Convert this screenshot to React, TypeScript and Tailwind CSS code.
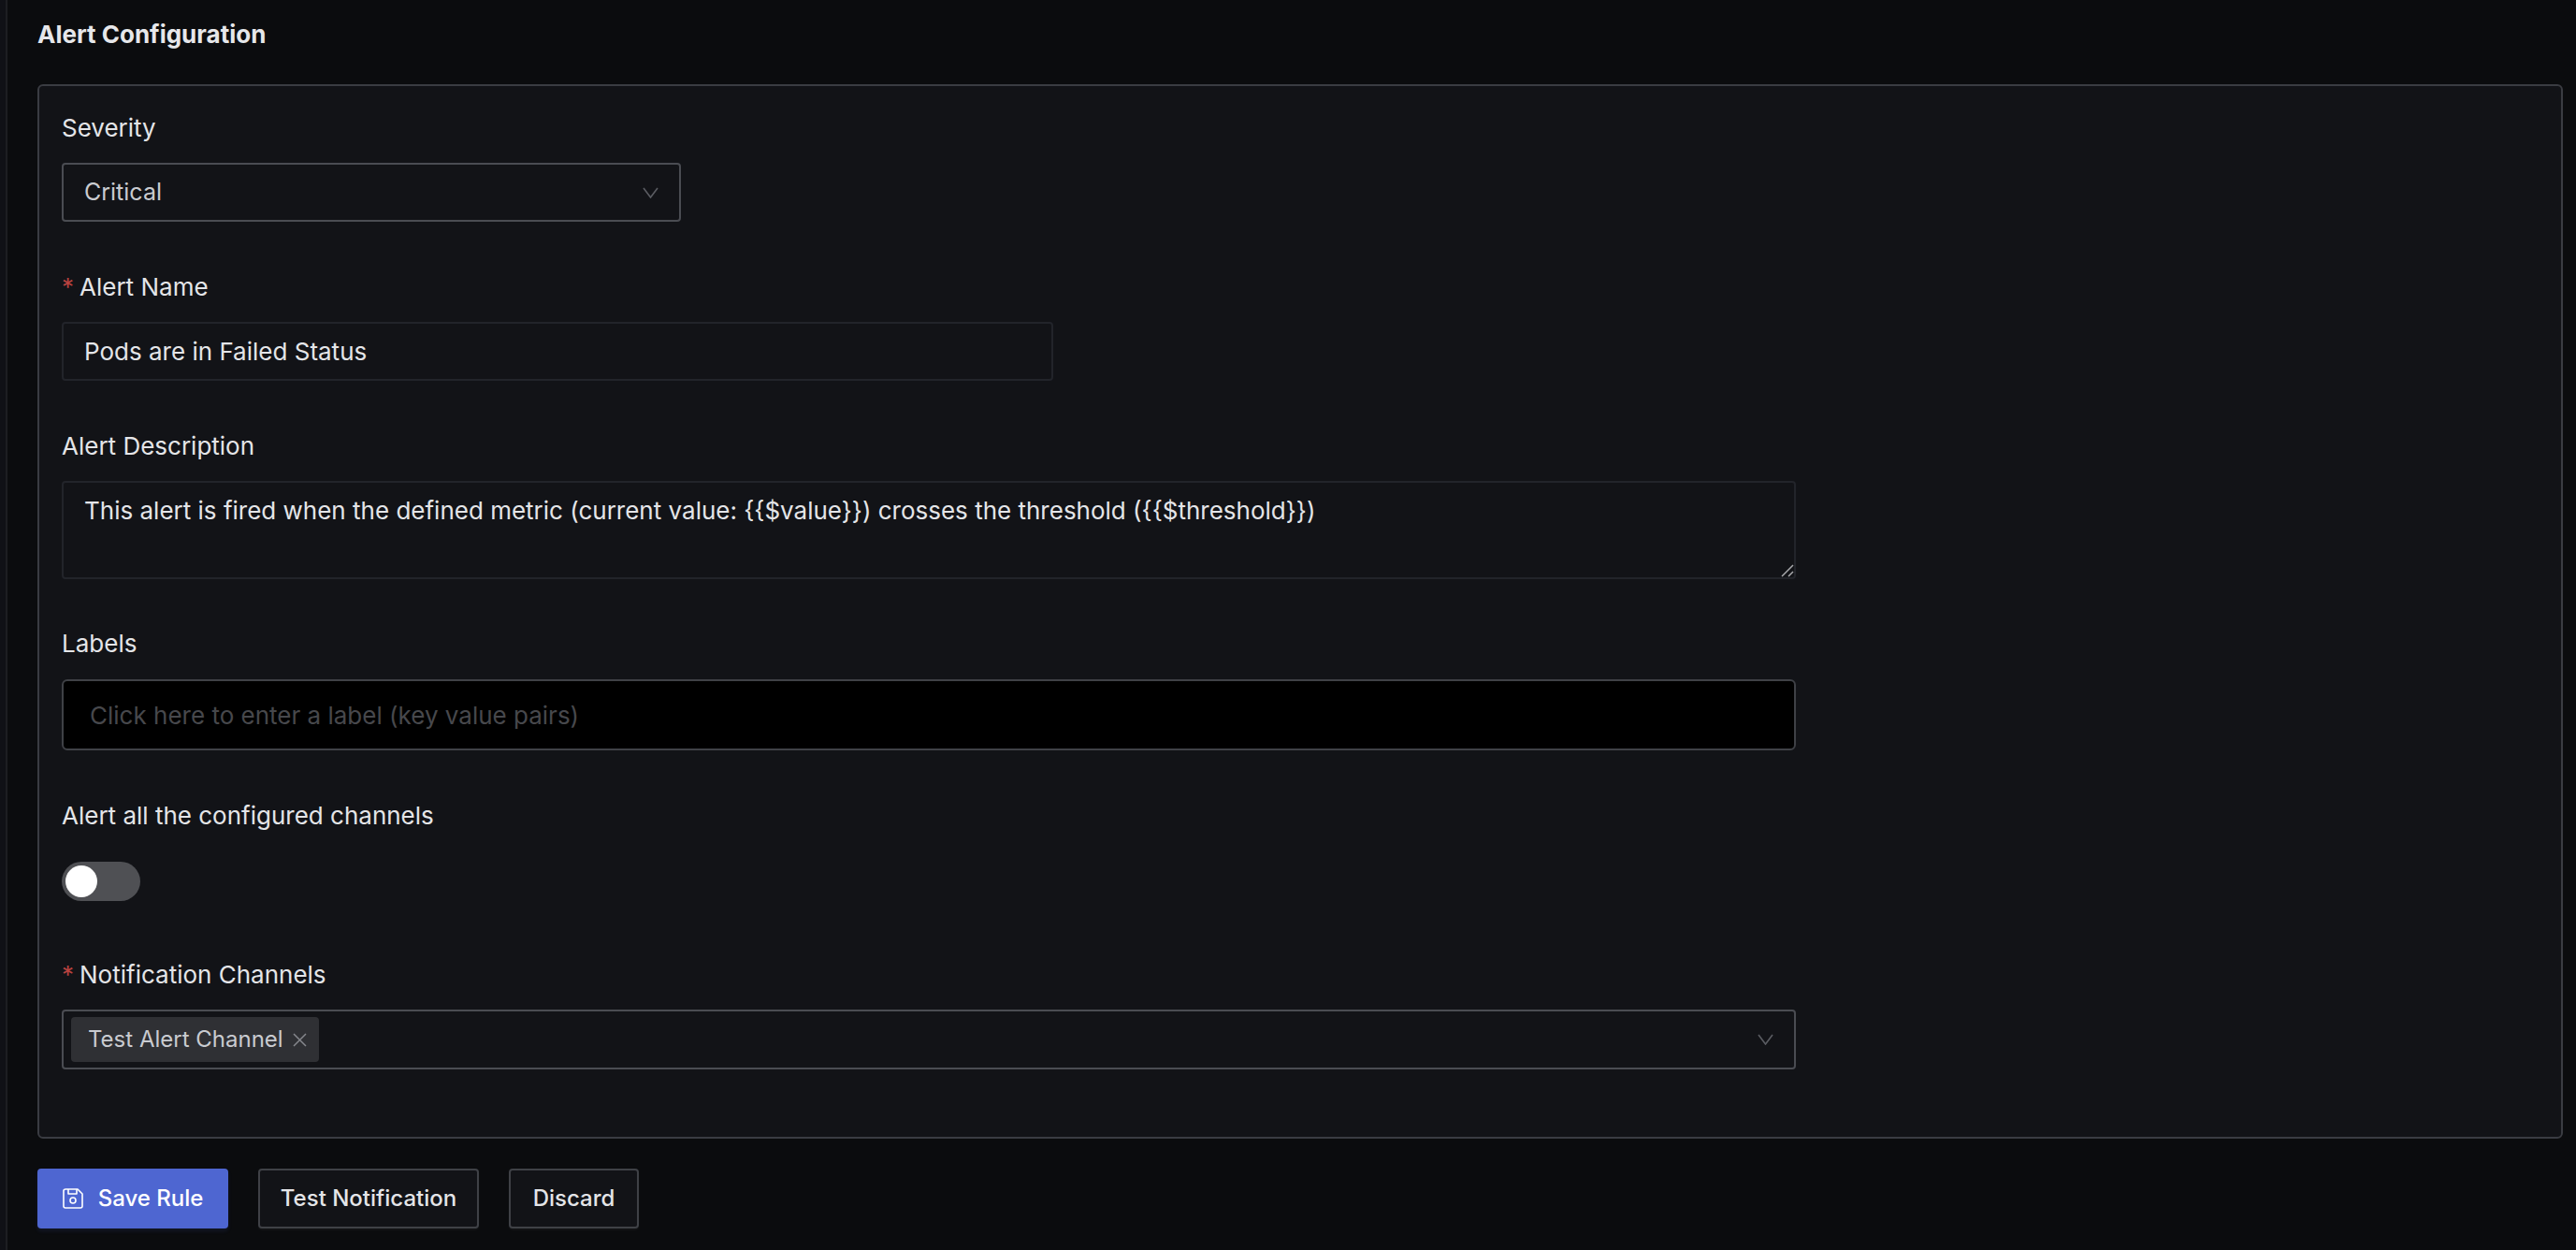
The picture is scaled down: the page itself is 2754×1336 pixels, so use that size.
const fieldLabel = "text-[26px] leading-[38px] text-[#e4e5e8]";

function Required() {
  return <span className="mr-[6px] text-[#b8423f]">*</span>;
}

function Chevron() {
  return (
    <svg width="17" height="12" viewBox="0 0 17 12" fill="none" stroke="#5a5c62" strokeWidth="1.6">
      <path d="M1 1L8.5 11L16 1" />
    </svg>
  );
}

export default function App() {
  return (
    <main className="h-[1336px] overflow-hidden bg-[#0b0c0e] font-['Inter',sans-serif] flex">
      {/* sidebar edge */}
      <div className="w-[8px] shrink-0 bg-[#101116] border-r-2 border-[#1d1e22]" />

      <div className="flex-1 pl-[32px] pr-[14px]">
        <h2 className="h-[90px] pt-[18px] text-[26px] leading-[38px] font-bold text-[#e6e7ea]">
          Alert Configuration
        </h2>

        <section className="h-[1127px] rounded-[6px] border-2 border-[#3a3c42] bg-[#121317] px-[24px] pt-[26px]">
          {/* Severity */}
          <label className={`block ${fieldLabel}`}>Severity</label>
          <div className="mt-[18px] flex h-[63px] w-[662px] items-center justify-between rounded-[4px] border-2 border-[#4a4c52] pl-[22px] pr-[22px]">
            <span className="text-[25px] text-[#c9cbd0]">Critical</span>
            <Chevron />
          </div>

          {/* Alert name */}
          <label className={`mt-[51px] block ${fieldLabel}`}>
            <Required />
            Alert Name
          </label>
          <div className="mt-[18px] flex h-[63px] w-[1060px] items-center rounded-[4px] border-2 border-[#22242a] pl-[22px]">
            <span className="text-[26px] text-[#e4e5e8]">Pods are in Failed Status</span>
          </div>

          {/* Description */}
          <label className={`mt-[51px] block ${fieldLabel}`}>Alert Description</label>
          <div className="relative mt-[18px] h-[105px] w-[1854px]">
            <textarea
              readOnly
              rows={2}
              className="block h-full w-full resize-none rounded-[4px] border-2 border-[#22242a] bg-transparent pl-[22px] pt-[12px] text-[26px] leading-[36px] text-[#e4e5e8] outline-none"
              value="This alert is fired when the defined metric (current value: {{$value}}) crosses the threshold ({{$threshold}})"
            />
            <svg className="absolute bottom-[2px] right-[2px]" width="14" height="14" viewBox="0 0 14 14" stroke="#a8a9ac" strokeWidth="1.5">
              <path d="M1 13L13 1M8 13L13 8" />
            </svg>
          </div>

          {/* Labels */}
          <label className={`mt-[50px] block ${fieldLabel}`}>Labels</label>
          <div className="mt-[19px] flex h-[76px] w-[1854px] items-center rounded-[6px] border-2 border-[#3f4146] bg-black pl-[28px]">
            <span className="text-[26px] text-[#47484c]">Click here to enter a label (key value pairs)</span>
          </div>

          {/* Alert all channels */}
          <label className={`mt-[51px] block ${fieldLabel}`}>Alert all the configured channels</label>
          <div className="mt-[30px] flex h-[42px] w-[84px] items-center rounded-full bg-[#4f5054] pl-[4px]">
            <div className="h-[34px] w-[34px] rounded-full bg-white" />
          </div>

          {/* Channels */}
          <label className={`mt-[60px] block ${fieldLabel}`}>
            <Required />
            Notification Channels
          </label>
          <div className="mt-[18px] flex h-[64px] w-[1854px] items-center justify-between rounded-[4px] border-2 border-[#4a4c52] pl-[8px] pr-[22px]">
            <div className="flex h-[48px] items-center gap-[10px] rounded-[4px] bg-[#2f3034] pl-[18px] pr-[13px]">
              <span className="text-[24px] text-[#c9cbd0]">Test Alert Channel</span>
              <svg width="15" height="15" viewBox="0 0 15 15" stroke="#85878c" strokeWidth="1.5">
                <path d="M1 1L14 14M14 1L1 14" />
              </svg>
            </div>
            <Chevron />
          </div>
        </section>

        {/* Actions */}
        <div className="mt-[32px] flex gap-[32px]">
          <button className="flex h-[64px] w-[204px] items-center justify-center gap-[16px] rounded-[4px] bg-[#4e66d1] text-[24px] font-medium text-white shadow-[0_3px_4px_rgba(78,102,209,0.12)]">
            <svg width="22" height="22" viewBox="0 0 22 22" fill="none" stroke="white" strokeWidth="1.6" strokeLinejoin="round">
              <path d="M3 1H16L21 6V19A2 2 0 0 1 19 21H3A2 2 0 0 1 1 19V3A2 2 0 0 1 3 1Z" />
              <path d="M6 1V6H15V1" />
              <circle cx="11" cy="13" r="3" />
            </svg>
            Save Rule
          </button>
          <button className="h-[64px] w-[236px] rounded-[4px] border-2 border-[#3f4146] bg-[#121317] text-[24px] font-medium text-[#e4e5e8] shadow-[0_2px_2px_rgba(255,255,255,0.04)]">
            Test Notification
          </button>
          <button className="h-[64px] w-[139px] rounded-[4px] border-2 border-[#3f4146] bg-[#121317] text-[24px] font-medium text-[#e4e5e8] shadow-[0_2px_2px_rgba(255,255,255,0.04)]">
            Discard
          </button>
        </div>
      </div>
    </main>
  );
}
